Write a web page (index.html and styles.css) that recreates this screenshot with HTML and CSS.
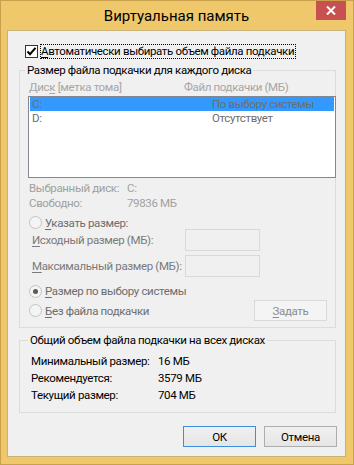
FILE: index.html
```html
<!DOCTYPE html>
<html lang="ru">
<head>
    <meta charset="UTF-8">
    <meta name="viewport" content="width=device-width, initial-scale=1.0">
    <title>Виртуальная память</title>
    <link rel="stylesheet" href="styles.css">
</head>
<body>
    <div class="window">
        <div class="titlebar">
            <div class="title">Виртуальная память</div>
            <div class="close">
                <svg width="10" height="9" viewBox="0 0 10 9">
                    <path d="M1 0.5 L9 8.5 M9 0.5 L1 8.5" stroke="#fff" stroke-width="2" fill="none"/>
                </svg>
            </div>
        </div>

        <div class="client">
            <div class="auto-row">
                <span class="checkbox">
                    <svg width="11" height="11" viewBox="0 0 11 11">
                        <path d="M1.5 5.5 L4 8.2 L9.5 1.8" stroke="#000" stroke-width="2" fill="none"/>
                    </svg>
                </span>
                <span class="focus-label"><u>А</u>втоматически выбирать объем файла подкачки</span>
            </div>

            <fieldset class="group group-drives">
                <legend>Размер файла подкачки для каждого диска</legend>
                <div class="cols">
                    <span class="col-disk">Дис<u>к</u> [метка тома]</span>
                    <span>Файл подкачки (МБ)</span>
                </div>
                <div class="listbox">
                    <div class="lb-row selected"><span class="lb-disk">C:</span><span>По выбору системы</span></div>
                    <div class="lb-row"><span class="lb-disk">D:</span><span>Отсутствует</span></div>
                </div>
                <div class="info">
                    <div class="info-row"><span class="info-label">Выбранный диск:</span><span>C:</span></div>
                    <div class="info-row"><span class="info-label">Свободно:</span><span>79836 МБ</span></div>
                </div>

                <div class="radio-row custom-radio">
                    <span class="radio"></span>
                    <span class="radio-text"><u>У</u>казать размер:</span>
                </div>
                <div class="field-row">
                    <span class="field-label"><u>И</u>сходный размер (МБ):</span>
                    <span class="textbox"></span>
                </div>
                <div class="field-row second">
                    <span class="field-label"><u>М</u>аксимальный размер (МБ):</span>
                    <span class="textbox"></span>
                </div>

                <div class="radio-row system-radio">
                    <span class="radio checked"></span>
                    <span class="radio-text"><u>Р</u>азмер по выбору системы</span>
                </div>
                <div class="last-row">
                    <div class="radio-row">
                        <span class="radio"></span>
                        <span class="radio-text"><u>Б</u>ез файла подкачки</span>
                    </div>
                    <button class="btn btn-disabled"><u>З</u>адать</button>
                </div>
            </fieldset>

            <fieldset class="group group-total">
                <legend>Общий объем файла подкачки на всех дисках</legend>
                <div class="total-row"><span class="total-label">Минимальный размер:</span><span>16 МБ</span></div>
                <div class="total-row"><span class="total-label">Рекомендуется:</span><span>3579 МБ</span></div>
                <div class="total-row"><span class="total-label">Текущий размер:</span><span>704 МБ</span></div>
            </fieldset>

            <div class="buttons">
                <button class="btn btn-default">ОК</button>
                <button class="btn">Отмена</button>
            </div>
        </div>
    </div>
</body>
</html>
```

FILE: styles.css
```css
* {
    box-sizing: border-box;
}

body {
    margin: 0;
    background: #fff;
    font-family: Roboto, "Noto Sans", sans-serif;
    font-size: 11.5px;
    letter-spacing: -0.35px;
    color: #000;
    white-space: nowrap;
}

u {
    text-decoration: underline;
    text-underline-offset: 2px;
}

/* window frame */
.window {
    width: 354px;
    height: 465px;
    background: #efc86b;
    border: 1px solid #c9a14d;
    padding: 0 7px 7px 6px;
    display: flex;
    flex-direction: column;
}

.titlebar {
    height: 29px;
    flex-shrink: 0;
    display: grid;
    grid-template-columns: 1fr auto 1fr;
    align-items: center;
}

.title {
    grid-column: 2;
    font-size: 15px;
    letter-spacing: 0;
    line-height: 20px;
    color: #000;
}

.close {
    grid-column: 3;
    justify-self: end;
    align-self: start;
    width: 30px;
    height: 19px;
    background: #c75050;
    display: flex;
    align-items: center;
    justify-content: center;
}

.client {
    flex: 1;
    min-height: 0;
    background: #f0f0f0;
    border: 1px solid #c9b27a;
    display: flex;
    flex-direction: column;
}

/* checkbox row */
.auto-row {
    margin: 13px 0 0 17px;
    height: 15px;
    display: flex;
    align-items: center;
}

.checkbox {
    flex-shrink: 0;
    width: 13px;
    height: 13px;
    border: 1px solid #333;
    background: #fff;
    margin-right: 2px;
    display: flex;
    align-items: center;
    justify-content: center;
}

.focus-label {
    border: 1px dotted #000;
    padding: 0 1px 0 0;
    line-height: 13px;
}

/* group boxes */
.group {
    margin: 4px 9px 0 11px;
    border: 1px solid #dcdcdc;
    min-width: 0;
}

.group legend {
    padding: 0 2px;
    margin-left: -3px;
    line-height: 14px;
}

.group-drives {
    padding: 3px 0 6px 8px;
}

.cols {
    display: flex;
    line-height: 14px;
    color: #a6a6a6;
    padding-left: 1px;
}

.col-disk {
    flex-shrink: 0;
    width: 155px;
}

.listbox {
    margin: 2px -1px 0 0;
    height: 82px;
    border: 1px solid #828790;
    background: #fff;
    padding: 0 1px;
}

.lb-row {
    display: flex;
    height: 14px;
    line-height: 14px;
    padding-left: 2px;
    color: #6d6d6d;
}

.lb-row.selected {
    background: #3399ff;
}

.lb-disk {
    flex-shrink: 0;
    width: 180px;
}

.info {
    margin-top: 3px;
    color: #a0a0a0;
}

.info-row {
    display: flex;
    line-height: 15px;
    padding-left: 1px;
}

.info-label {
    flex-shrink: 0;
    width: 98px;
}

.radio-row {
    display: flex;
    align-items: center;
    height: 13px;
    padding-left: 1px;
    color: #6d6d6d;
}

.custom-radio {
    margin-top: 5px;
}

.system-radio {
    margin-top: 7px;
    height: 14px;
}

.radio {
    flex-shrink: 0;
    width: 13px;
    height: 13px;
    border-radius: 50%;
    border: 1px solid #c4c4c4;
    background: #f4f4f4;
    margin-right: 3px;
    display: flex;
    align-items: center;
    justify-content: center;
}

.radio.checked::after {
    content: "";
    width: 5px;
    height: 5px;
    border-radius: 50%;
    background: #5a5a5a;
}

.radio-text {
    line-height: 14px;
}

.field-row {
    display: flex;
    align-items: center;
    height: 22px;
    padding-left: 4px;
    color: #7a7a7a;
}

.field-row.second {
    margin-top: 4px;
}

.field-label {
    flex-shrink: 0;
    width: 153px;
}

.textbox {
    flex-shrink: 0;
    width: 75px;
    height: 22px;
    border: 1px solid #d9d9d9;
    background: #f0f0f0;
}

.last-row {
    margin-top: 2px;
    height: 21px;
    display: flex;
    align-items: center;
    justify-content: space-between;
    padding-right: 8px;
}

/* buttons */
.btn {
    flex-shrink: 0;
    width: 73px;
    height: 21px;
    padding: 0;
    font-family: inherit;
    font-size: 11.5px;
    letter-spacing: -0.35px;
    color: #000;
    border: 1px solid #adadad;
    background: linear-gradient(#f0f0f0, #e5e5e5);
    line-height: 18px;
}

.btn-default {
    border-color: #3c8fe0;
}

.btn-disabled {
    border-color: #d9d9d9;
    background: #f4f4f4;
    color: #8c8c8c;
}

.group-total {
    margin-top: 5px;
    padding: 6px 0 8px 11px;
}

.total-row {
    display: flex;
    line-height: 17px;
}

.total-label {
    flex-shrink: 0;
    width: 127px;
}

.buttons {
    margin-top: 13px;
    display: flex;
    justify-content: flex-end;
    gap: 8px;
    padding-right: 8px;
}
```
